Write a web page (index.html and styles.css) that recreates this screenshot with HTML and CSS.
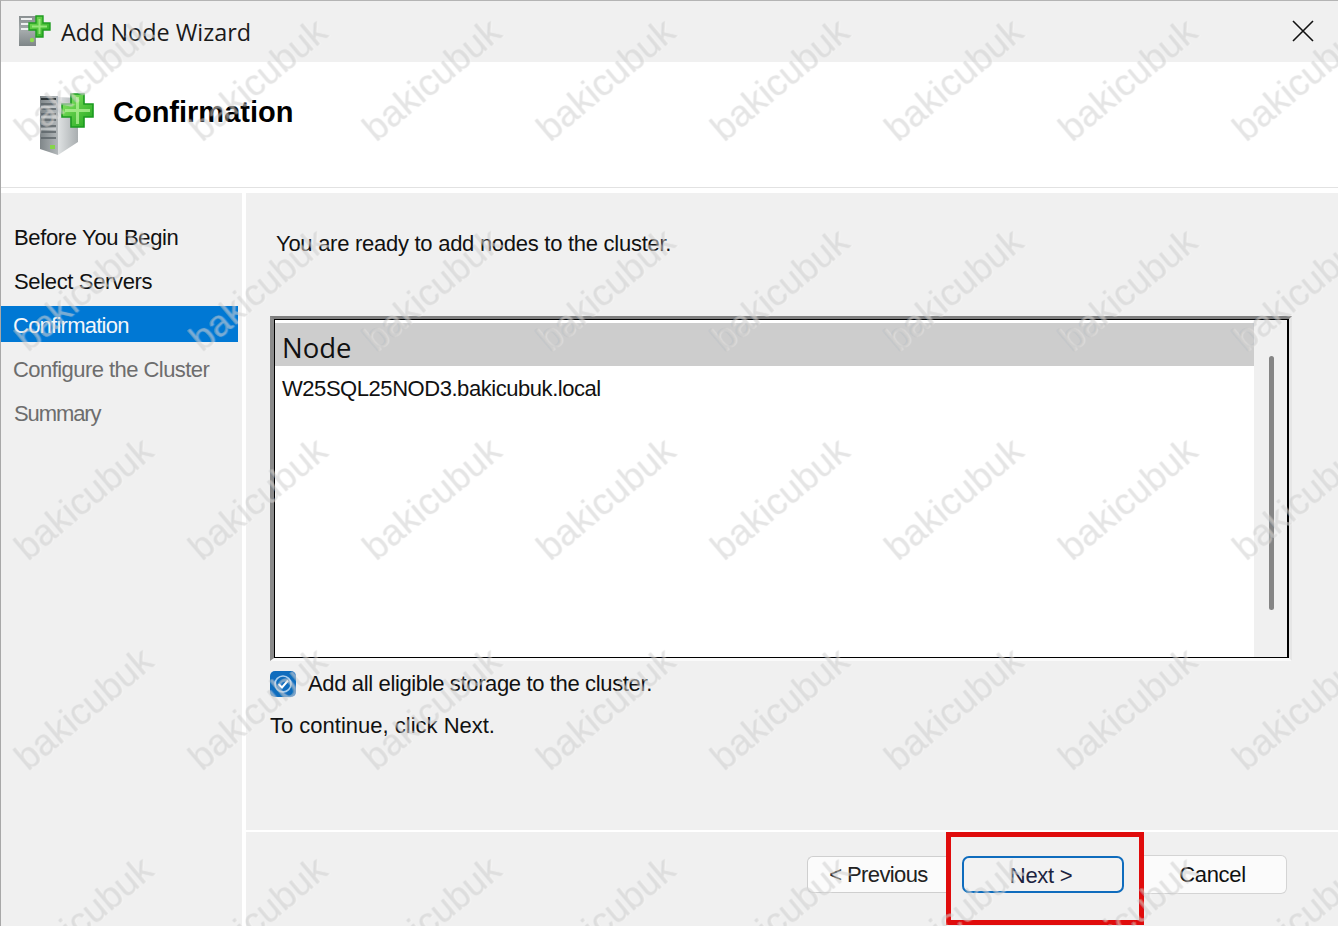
FILE: index.html
```html
<!DOCTYPE html>
<html lang="en">
<head>
<meta charset="utf-8">
<title>Add Node Wizard</title>
<link rel="stylesheet" href="styles.css">
</head>
<body>
<div class="window">
  <div class="titlebar">
    <svg class="title-icon" viewBox="0 0 32 32">
      <defs>
        <linearGradient id="srv" x1="0" x2="0" y1="0" y2="1"><stop offset="0" stop-color="#8a9092"/><stop offset="0.5" stop-color="#a4aaab"/><stop offset="1" stop-color="#7f8688"/></linearGradient>
        <linearGradient id="plus1" x1="0" x2="1" y1="0" y2="1"><stop offset="0" stop-color="#7fe05a"/><stop offset="1" stop-color="#22a81e"/></linearGradient>
      </defs>
      <rect x="0" y="1" width="17" height="30" fill="url(#srv)"/>
      <path d="M2 4h11M2 9h8M2 14h8" stroke="#eef0f0" stroke-width="2.200"/>
      <circle cx="13" cy="25" r="2.200" fill="#8fdc4e"/>
      <path d="M17 1h7v7h7v7h-7v7h-7v-7h-7V8h7z" fill="url(#plus1)" stroke="#1f9c20" stroke-width="1.400"/>
      <path d="M20.500 4v15M13 11.500h15" stroke="#a8f08a" stroke-width="2" opacity="0.8"/>
    </svg>
    <span class="title-text">Add Node Wizard</span>
    <svg class="close" viewBox="0 0 22 22"><path d="M1 1l20 20M21 1L1 21" stroke="#111" stroke-width="1.6" fill="none"/></svg>
  </div>
  <div class="header">
    <svg class="header-icon" viewBox="0 0 56 64">
      <defs>
        <linearGradient id="front" x1="0" x2="1" y1="0" y2="0"><stop offset="0" stop-color="#7f8689"/><stop offset="1" stop-color="#b3b8ba"/></linearGradient>
        <linearGradient id="side" x1="0" x2="1" y1="0" y2="0"><stop offset="0" stop-color="#dfe2e3"/><stop offset="1" stop-color="#a9aeb0"/></linearGradient>
        <linearGradient id="plus2" x1="0" x2="1" y1="0" y2="1"><stop offset="0" stop-color="#8ee867"/><stop offset="1" stop-color="#1fa61d"/></linearGradient>
      </defs>
      <path d="M0 3h18v59L0 56z" fill="url(#front)"/>
      <path d="M18 4l20 1v44l-20 13z" fill="url(#side)"/>
      <path d="M1 6h15" stroke="#2f3638" stroke-width="2"/>
      <path d="M1 11h15M1 16h15M1 21h15M1 27h15M1 33h15M1 39h15M1 45h15" stroke="#5a6265" stroke-width="1.600"/>
      <path d="M1 14h15M1 24h15M1 36h15" stroke="#e6e9ea" stroke-width="1"/>
      <rect x="10" y="52" width="5" height="4" fill="#85d44a"/>
      <path d="M31 1h13v10h9v13h-9v10H31V24h-9V11h9z" fill="url(#plus2)" stroke="#1b9a20" stroke-width="1.600"/>
      <path d="M37.500 4v27M25 17.500h25" stroke="#b4f298" stroke-width="3" opacity="0.75"/>
    </svg>
    <h1 class="page-title">Confirmation</h1>
  </div>
  <div class="body">
    <nav class="nav">
      <div class="nav-item">Before You Begin</div>
      <div class="nav-item">Select Servers</div>
      <div class="nav-item nav-active">Confirmation</div>
      <div class="nav-item nav-muted">Configure the Cluster</div>
      <div class="nav-item nav-muted nav-summary">Summary</div>
    </nav>
    <main class="main">
      <div class="content">
        <p class="ready">You are ready to add nodes to the cluster.</p>
        <div class="list-frame">
          <div class="list-inner">
            <div class="list">
              <div class="list-head">Node</div>
              <div class="list-row">W25SQL25NOD3.bakicubuk.local</div>
            </div>
            <div class="scroll"><div class="thumb"></div></div>
          </div>
        </div>
        <div class="check-row">
          <svg class="check" viewBox="0 0 26 26">
            <rect width="26" height="26" rx="5" fill="#0f6cbd"/>
            <circle cx="13" cy="13" r="8" fill="none" stroke="#a9cdec" stroke-width="1.6"/>
            <path d="M8.500 13l3.500 3.500 6-7" fill="none" stroke="#fff" stroke-width="2"/>
          </svg>
          <span>Add all eligible storage to the cluster.</span>
        </div>
        <p class="continue">To continue, click Next.</p>
      </div>
      <div class="footer">
        <button class="btn btn-prev">&lt; Previous</button>
        <div class="highlight"><button class="btn btn-next">Next &gt;</button></div>
        <button class="btn btn-cancel">Cancel</button>
      </div>
    </main>
  </div>
  <div class="watermarks" aria-hidden="true">
    <span>bakicubuk</span><span>bakicubuk</span><span>bakicubuk</span><span>bakicubuk</span><span>bakicubuk</span><span>bakicubuk</span><span>bakicubuk</span><span>bakicubuk</span>
    <span>bakicubuk</span><span>bakicubuk</span><span>bakicubuk</span><span>bakicubuk</span><span>bakicubuk</span><span>bakicubuk</span><span>bakicubuk</span><span>bakicubuk</span>
    <span>bakicubuk</span><span>bakicubuk</span><span>bakicubuk</span><span>bakicubuk</span><span>bakicubuk</span><span>bakicubuk</span><span>bakicubuk</span><span>bakicubuk</span>
    <span>bakicubuk</span><span>bakicubuk</span><span>bakicubuk</span><span>bakicubuk</span><span>bakicubuk</span><span>bakicubuk</span><span>bakicubuk</span><span>bakicubuk</span>
    <span>bakicubuk</span><span>bakicubuk</span><span>bakicubuk</span><span>bakicubuk</span><span>bakicubuk</span><span>bakicubuk</span><span>bakicubuk</span><span>bakicubuk</span>
  </div>
</div>
</body>
</html>
```
FILE: styles.css
```css
* { box-sizing: border-box; }
html, body { margin: 0; padding: 0; }
body { width: 1338px; height: 926px; overflow: hidden; background: #f0f0f0; font-family: "Liberation Sans", Arial, sans-serif; color: #111; }
.window { position: relative; width: 1338px; height: 926px; overflow: hidden; background: #fff; border-top: 1px solid #b4b4b4; border-left: 1px solid #a8a8a8; display: flex; flex-direction: column; }
.titlebar { height: 61px; flex: none; background: #f0f0f0; display: flex; align-items: center; padding-left: 18px; padding-right: 24px; }
.title-icon { width: 32px; height: 32px; flex: none; margin-bottom: 2px; }
.title-text { margin-left: 10px; font-family: "Open Sans", sans-serif; font-size: 23.4px; color: #1a1a1a; }
.close { width: 22px; height: 22px; margin-left: auto; margin-bottom: 2px; }
.header { height: 126px; flex: none; background: #fff; display: flex; align-items: flex-start; padding: 31px 0 0 39px; border-bottom: 1px solid #e2e2e2; }
.header-icon { width: 56px; height: 64px; flex: none; }
.page-title { margin: 2px 0 0 17px; font-family: "Liberation Sans", sans-serif; font-size: 29px; font-weight: 700; color: #000; line-height: 34px; }
.body { flex: 1; display: flex; margin-top: 5px; min-height: 0; }
.nav { width: 241px; flex: none; background: #f0f0f0; padding-top: 25px; display: flex; flex-direction: column; gap: 8px; }
.nav-item { height: 36px; width: 237px; padding-left: 13px; font-size: 22px; line-height: 40px; letter-spacing: -0.35px; white-space: nowrap; }
.nav-active { background: #0078d4; color: #f2f6fa; padding-left: 12px; letter-spacing: -0.75px; }
.nav-muted { color: #6d6d6d; padding-left: 12px; letter-spacing: -0.55px; }
.nav-summary { letter-spacing: -1.1px; padding-left: 13px; }
.main { flex: 1; margin-left: 4px; background: #f0f0f0; display: flex; flex-direction: column; min-width: 0; }
.content { flex: 1; padding: 0 0 0 24px; min-height: 0; }
.ready { margin: 37px 0 0 6px; font-size: 22px; line-height: 28px; letter-spacing: -0.27px; }
.list-frame { width: 1022px; height: 345px; margin-top: 58px; border-top: 3px solid #7f7f7f; border-left: 4px solid #8a8a8a; border-right: 3px solid #e6e6e6; border-bottom: 3px solid #fafafa; }
.list-inner { height: 100%; display: flex; border: 1px solid #000; border-right-width: 2px; background: #f0f0f0; }
.list { flex: 1; background: #fff; padding-top: 3px; }
.list-head { height: 43px; background: #cdcdcd; padding-left: 7px; font-family: "Open Sans", sans-serif; font-size: 27.5px; line-height: 50px; color: #111; }
.list-row { padding-left: 7px; font-size: 22px; line-height: 46px; letter-spacing: -0.45px; color: #111; }
.scroll { width: 33px; flex: none; padding: 36px 0 0 15px; }
.thumb { width: 5px; height: 254px; border-radius: 3px; background: #858585; }
.check-row { display: flex; align-items: center; gap: 12px; margin-top: 10px; font-size: 22px; letter-spacing: -0.36px; }
.check { width: 26px; height: 26px; flex: none; }
.continue { margin: 15px 0 0; font-size: 22px; line-height: 28px; }
.footer { height: 96px; flex: none; border-top: 2px solid #fff; display: flex; padding-left: 561px; }
.btn { font-family: "Liberation Sans", sans-serif; font-size: 22px; color: #111; padding: 0; letter-spacing: -0.3px; }
.btn-prev { width: 139px; height: 37px; margin-top: 24px; background: #fbfbfb; border: 1px solid #cfcfcf; border-right: 0; border-radius: 6px 0 0 6px; color: #222; padding-left: 3px; letter-spacing: -0.6px; }
.highlight { width: 198px; height: 93px; border: 5px solid #e00c0c; padding: 19px 0 0 11px; background: #f0f0f0; }
.btn-next { display: block; width: 162px; height: 37px; background: #f2f2f2; border: 2px solid #0f6cbd; border-radius: 7px; color: #1c2340; padding-top: 2px; padding-right: 4px; }
.btn-cancel { width: 143px; height: 39px; margin-top: 23px; background: #fbfbfb; border: 1px solid #d4d4d4; border-left: 0; border-radius: 0 6px 6px 0; padding-right: 5px; }
.watermarks { position: absolute; left: -4px; top: -26px; display: grid; grid-template-columns: repeat(8, 174px); grid-auto-rows: 209.5px; pointer-events: none; }
.watermarks span { display: flex; align-items: center; justify-content: center; transform: rotate(-40deg); font-size: 37px; color: rgba(240,240,240,0.3); text-shadow: 0 0 1px rgba(0,0,0,0.12), 1px 1px 1px rgba(255,255,255,0.35); white-space: nowrap; }
```
